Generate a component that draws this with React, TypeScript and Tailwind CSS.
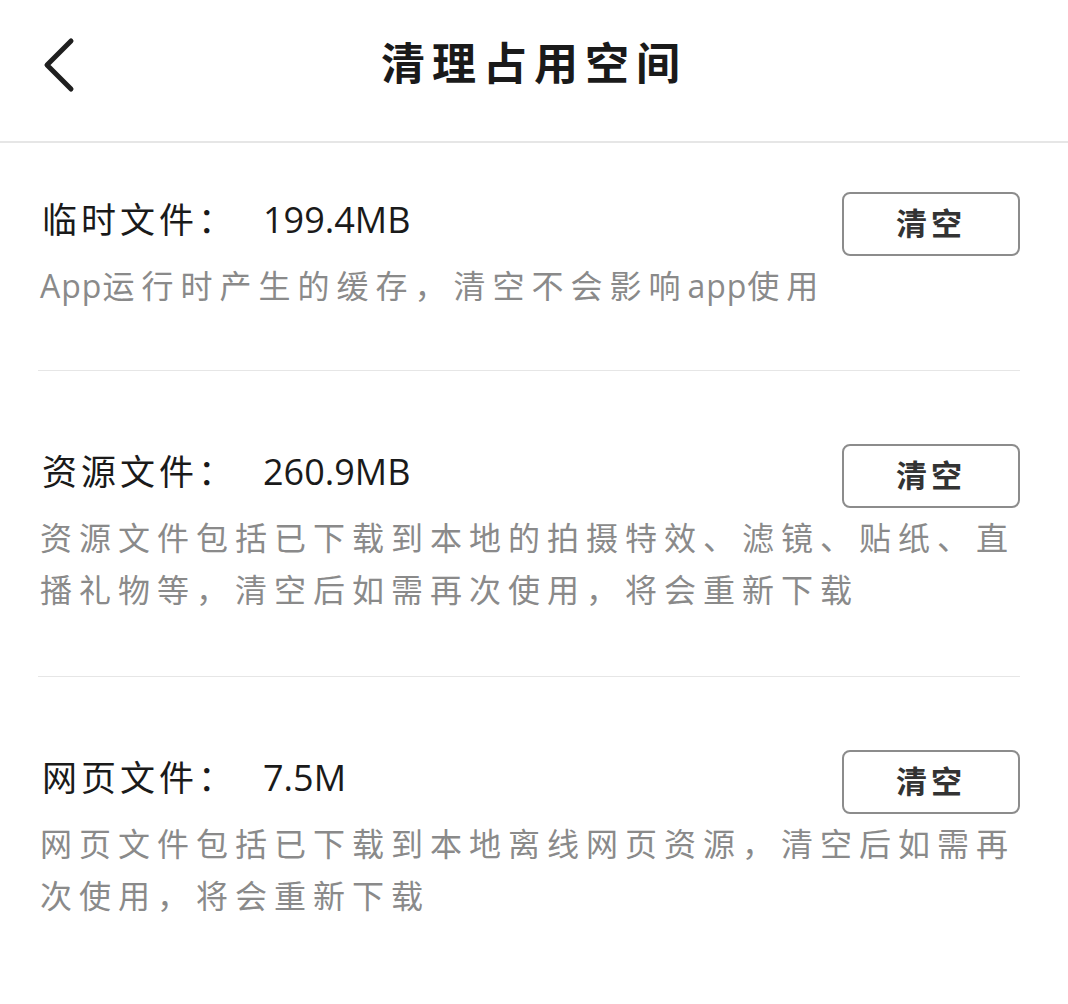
import React from 'react';

const cjk = '"Noto Sans CJK SC", "Noto Sans", sans-serif';
const latin = '"Open Sans", "Noto Sans", sans-serif';

type Part = string | { latin: string };

const sections: { name: string; size: string; desc: Part[]; pb: string }[] = [
  {
    name: '临时文件：',
    size: '199.4MB',
    desc: [{ latin: 'App' }, '运行时产生的缓存，清空不会影响', { latin: 'app' }, '使用'],
    pb: 'pb-[58px]',
  },
  {
    name: '资源文件：',
    size: '260.9MB',
    desc: ['资源文件包括已下载到本地的拍摄特效、滤镜、贴纸、直播礼物等，清空后如需再次使用，将会重新下载'],
    pb: 'pb-[62px]',
  },
  {
    name: '网页文件：',
    size: '7.5M',
    desc: ['网页文件包括已下载到本地离线网页资源，清空后如需再次使用，将会重新下载'],
    pb: 'pb-[58px]',
  },
];

const App: React.FC = () => {
  return (
    <div className="w-[1068px] min-h-[1004px] bg-white" style={{ fontFamily: cjk }}>
      {/* header */}
      <div className="relative h-[143px] flex items-center justify-center border-b-2 border-[#e6e6e6]">
        <button className="absolute left-[38px] top-[36px] w-[40px] h-[58px] flex items-center justify-center">
          <svg width="36" height="56" viewBox="0 0 36 56" fill="none">
            <path d="M31 4 L7 28 L31 52" stroke="#1f1f1f" strokeWidth="5" strokeLinecap="round" strokeLinejoin="round" />
          </svg>
        </button>
        <h1 className="-mt-[20px] text-[44px] font-bold tracking-[7px] text-[#1a1a1a]">清理占用空间</h1>
      </div>

      <div className="px-[38px] pr-[48px]">
        {sections.map((s, i) => (
          <div
            key={i}
            className={`${i === 0 ? 'pt-[49px]' : 'pt-[73px]'} ${s.pb} ${i < sections.length - 1 ? 'border-b border-[#e6e6e6]' : ''}`}
          >
            <div className="flex items-center justify-between h-[64px]">
              <div className="-mt-[10px] flex items-baseline text-[#1a1a1a]">
                <span className="text-[35px] tracking-[4px] pl-[4px]">{s.name}</span>
                <span className="ml-[26px] text-[36px]" style={{ fontFamily: latin }}>
                  {s.size}
                </span>
              </div>
              <button className="w-[178px] h-[64px] rounded-[8px] border-2 border-[#8c8c8c] text-[31px] leading-none font-bold tracking-[4px] text-[#333333] flex items-center justify-center pb-[6px]">
                清空
              </button>
            </div>
            <p className="mt-[2px] text-[32px] leading-[52px] tracking-[7px] text-[#8a8a8a] pl-[2px]">
              {s.desc.map((p, j) =>
                typeof p === 'string' ? (
                  <React.Fragment key={j}>{p}</React.Fragment>
                ) : (
                  <span key={j} className="tracking-[1px]" style={{ fontFamily: latin }}>
                    {p.latin}
                  </span>
                )
              )}
            </p>
          </div>
        ))}
      </div>
    </div>
  );
};

export default App;
